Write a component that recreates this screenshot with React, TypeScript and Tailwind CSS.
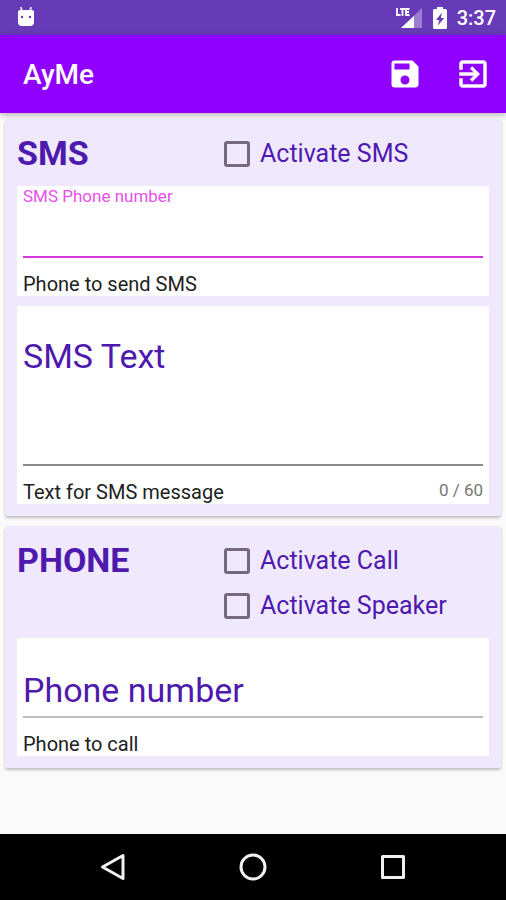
import type { ReactNode } from "react";
import { MdSave } from "react-icons/md";

function StatusBar() {
  return (
    <div className="flex h-[35px] items-center bg-[#673ab7] pl-[17px] pr-2.5 text-white">
      <svg width="18" height="22" viewBox="0 0 18 22" aria-hidden="true">
        <path d="M4 0l1 5M14 0l-1 5" stroke="#e0d5f5" strokeWidth="2" fill="none" />
        <path d="M1 5q0-2 2-2h12q2 0 2 2v10q0 4-4 4H5q-4 0-4-4z" fill="white" />
        <circle cx="5" cy="10" r="1.2" fill="#673ab7" />
        <circle cx="13" cy="10" r="1.2" fill="#673ab7" />
      </svg>
      <div className="ml-auto flex items-center">
        <svg width="26" height="22" viewBox="0 0 26 22" aria-hidden="true">
          <path d="M26 1v20H5z" fill="white" opacity="0.35" />
          <path d="M18 9v12H5z" fill="white" />
          <path d="M0 0h14v10H0z" fill="#673ab7" />
          <path
            d="M1 1v7h3.500M4 2h5M6.500 2v7M13.500 2H10v6h3.500M10 5h3"
            stroke="white"
            strokeWidth="1.800"
            fill="none"
          />
        </svg>
        <svg className="ml-[11px]" width="14" height="22" viewBox="0 0 14 22" aria-hidden="true">
          <path d="M4 0h6v2h2.500q1.500 0 1.500 1.500v17q0 1.500-1.500 1.500h-11Q0 22 0 20.500v-17Q0 2 1.500 2H4z" fill="white" />
          <path d="M9 5.500L3 13h3.200L5 18.500 11.200 11H7.800z" fill="#673ab7" />
        </svg>
        <span className="ml-2.5 text-[20px] font-medium leading-6">3:37</span>
      </div>
    </div>
  );
}

function ExitIcon() {
  return (
    <svg width="36" height="36" viewBox="0 0 24 24" fill="currentColor" stroke="currentColor" strokeWidth="0.3" aria-hidden="true">
      <path d="M10.090 15.590L11.500 17l5-5-5-5-1.410 1.410L12.670 11H3v2h9.670l-2.580 2.590zM19 3H5c-1.110 0-2 .9-2 2v4h2V5h14v14H5v-4H3v4c0 1.100.89 2 2 2h14c1.100 0 2-.9 2-2V5c0-1.100-.9-2-2-2z" />
    </svg>
  );
}

function AppBar() {
  return (
    <header className="relative flex h-[78px] items-center bg-[#9000ff] pl-[23px] pr-[15px] text-white shadow-[0_2px_6px_rgba(0,0,0,0.28)]">
      <h1 className="pt-0.5 text-[28px] font-medium leading-8">AyMe</h1>
      <div className="ml-auto flex gap-8">
        <button type="button" aria-label="Save">
          <MdSave size={36} />
        </button>
        <button type="button" aria-label="Exit">
          <ExitIcon />
        </button>
      </div>
    </header>
  );
}

function CheckOption({ id, label }: { id: string; label: string }) {
  return (
    <div className="flex h-[45px] items-center gap-2.5">
      <input
        id={id}
        type="checkbox"
        className="size-[26px] shrink-0 appearance-none rounded-[3px] border-3 border-[#75697f] checked:bg-[#9000ff]"
      />
      <label htmlFor={id} className="text-[25px] leading-[34px]">
        {label}
      </label>
    </div>
  );
}

function Card({ title, options, children }: { title: string; options: ReactNode; children: ReactNode }) {
  return (
    <section className="flex flex-col gap-2.5 rounded-[3px] bg-[#f0e9fe] p-3 text-[#4e1aae] shadow-[0_2px_3px_rgba(0,0,0,0.24)]">
      <div className="grid grid-cols-[207px_1fr]">
        <h2 className="text-[34px] font-bold leading-[45px]">{title}</h2>
        <div>{options}</div>
      </div>
      {children}
    </section>
  );
}

function Helper({ id, text, count }: { id: string; text: string; count?: string }) {
  return (
    <div className="mt-3.5 flex justify-between leading-6">
      <p id={id} className="text-[20px] text-[#212121]">
        {text}
      </p>
      {count && <span className="text-[17px] leading-5 text-[#757575]">{count}</span>}
    </div>
  );
}

export default function App() {
  return (
    <div className="flex min-h-screen flex-col bg-[#fafafa] font-[Roboto,sans-serif]">
      <StatusBar />
      <AppBar />
      <main className="flex flex-1 flex-col gap-2.5 px-[5px] py-1.5">
        <Card title="SMS" options={<CheckOption id="activate-sms" label="Activate SMS" />}>
          <div className="bg-white px-1.5">
            <div className="flex h-[72px] flex-col border-b-2 border-[#d836dc]">
              <label htmlFor="sms-phone" className="text-[17px] leading-5 text-[#e84fec]">
                SMS Phone number
              </label>
              <input
                id="sms-phone"
                type="tel"
                aria-describedby="sms-phone-help"
                className="min-h-0 w-full flex-1 text-[34px] outline-none"
              />
            </div>
            <Helper id="sms-phone-help" text="Phone to send SMS" />
          </div>
          <div className="bg-white px-1.5">
            <div className="grid h-40 border-b-2 border-[#8a8a8a] pt-[30px]">
              <textarea
                id="sms-text"
                placeholder=" "
                maxLength={60}
                aria-describedby="sms-text-help"
                className="peer col-start-1 row-start-1 resize-none text-[34px] leading-10 outline-none"
              />
              <label
                htmlFor="sms-text"
                className="col-start-1 row-start-1 text-[34px] leading-10 peer-[:not(:placeholder-shown)]:invisible"
              >
                SMS Text
              </label>
            </div>
            <Helper id="sms-text-help" text="Text for SMS message" count="0 / 60" />
          </div>
        </Card>

        <Card
          title="PHONE"
          options={
            <>
              <CheckOption id="activate-call" label="Activate Call" />
              <CheckOption id="activate-speaker" label="Activate Speaker" />
            </>
          }
        >
          <div className="bg-white px-1.5">
            <div className="grid h-20 border-b-2 border-[#bdbdbd] pt-8">
              <input
                id="phone"
                type="tel"
                placeholder=" "
                aria-describedby="phone-help"
                className="peer col-start-1 row-start-1 w-full text-[34px] leading-10 outline-none"
              />
              <label
                htmlFor="phone"
                className="col-start-1 row-start-1 text-[34px] leading-10 peer-[:not(:placeholder-shown)]:invisible"
              >
                Phone number
              </label>
            </div>
            <Helper id="phone-help" text="Phone to call" />
          </div>
        </Card>
      </main>

      <nav className="flex h-[66px] justify-center gap-[92px] bg-black">
        <button type="button" aria-label="Back" className="flex w-12 items-center justify-center">
          <svg width="28" height="28" viewBox="0 0 28 28" fill="none" stroke="#f0f0f0" strokeWidth="3" strokeLinejoin="round">
            <path d="M24 2.500v23L3.500 14z" />
          </svg>
        </button>
        <button type="button" aria-label="Home" className="flex w-12 items-center justify-center">
          <svg width="28" height="28" viewBox="0 0 28 28" fill="none" stroke="#f0f0f0" strokeWidth="3">
            <circle cx="14" cy="14" r="12" />
          </svg>
        </button>
        <button type="button" aria-label="Overview" className="flex w-12 items-center justify-center">
          <svg width="28" height="28" viewBox="0 0 28 28" fill="none" stroke="#f0f0f0" strokeWidth="3" strokeLinejoin="round">
            <rect x="3.500" y="3.500" width="21" height="21" />
          </svg>
        </button>
      </nav>
    </div>
  );
}
